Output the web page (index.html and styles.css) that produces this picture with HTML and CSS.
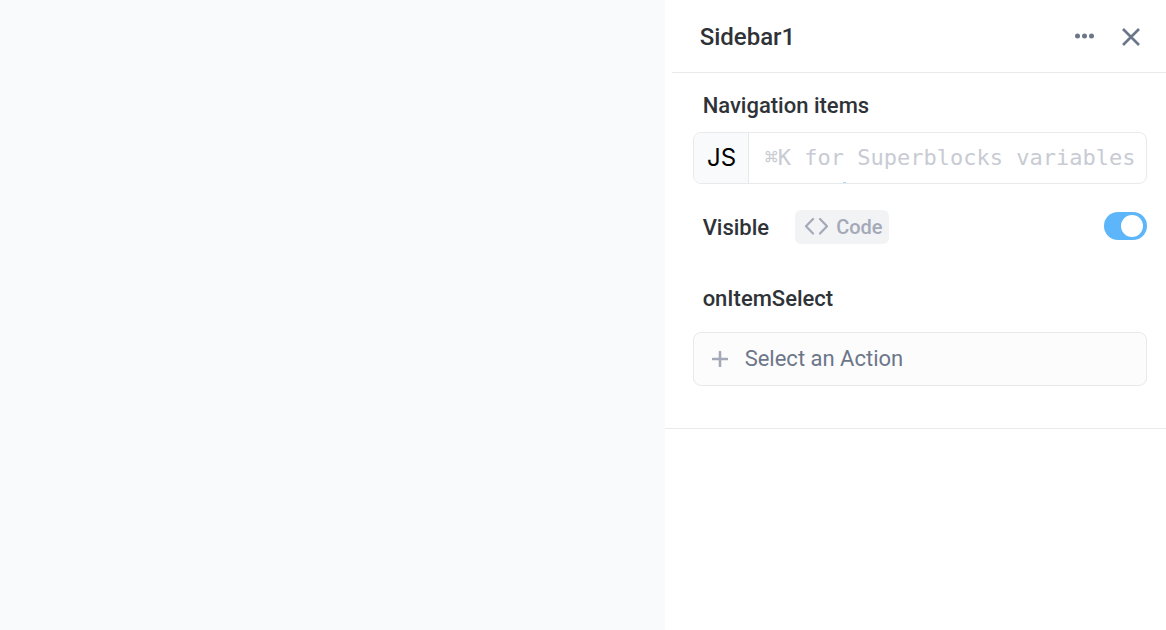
FILE: index.html
```
<!DOCTYPE html>
<html lang="en">
<head>
<meta charset="UTF-8">
<meta name="viewport" content="width=device-width, initial-scale=1.0">
<title>Sidebar1</title>
<link rel="stylesheet" href="styles.css">
</head>
<body>

<div class="editor">
  <main class="canvas"></main>

  <aside class="panel">
    <header class="panel-header">
      <h1 class="panel-title">Sidebar1</h1>
      <button class="icon-button" type="button" aria-label="More options">
        <svg width="20" height="6" viewBox="0 0 20 6" fill="currentColor">
          <circle cx="2.5" cy="3" r="2.5"/>
          <circle cx="9.5" cy="3" r="2.5"/>
          <circle cx="16.5" cy="3" r="2.5"/>
        </svg>
      </button>
      <button class="icon-button close" type="button" aria-label="Close">
        <svg width="18" height="20" viewBox="0 0 18 20" fill="none" stroke="currentColor" stroke-width="2.6">
          <path d="M1 3l16 16M17 3L1 19"/>
        </svg>
      </button>
    </header>

    <section class="properties">
      <label class="label" for="navItems">Navigation items</label>
      <div class="code-field">
        <span class="code-lang">JS</span>
        <input class="code-input" id="navItems" type="text" placeholder="⌘K for Superblocks variables">
        <span class="cursor-mark"></span>
      </div>

      <div class="row">
        <label class="label" for="visible">Visible</label>
        <button class="code-button" type="button">
          <svg width="24" height="18" viewBox="0 0 24 18" fill="none" stroke="currentColor" stroke-width="2.2" stroke-linecap="round" stroke-linejoin="round">
            <path d="M9 1L2 8.300l7 7.200M16 1l7 7.300-7 7.200"/>
          </svg>
          Code
        </button>
        <input class="toggle" id="visible" type="checkbox" checked>
      </div>

      <h2 class="label">onItemSelect</h2>
      <button class="action-button" type="button">
        <svg width="16" height="16" viewBox="0 0 16 16" fill="none" stroke="currentColor" stroke-width="2.6" stroke-linecap="round">
          <path d="M8 1v14M1 8h14"/>
        </svg>
        <span>Select an Action</span>
      </button>
    </section>
  </aside>
</div>

</body>
</html>
```
FILE: styles.css
```
* {
  box-sizing: border-box;
}

body {
  margin: 0;
  font-family: Roboto, sans-serif;
  color: #2f3338;
  background-color: #ffffff;
}

button {
  margin: 0;
  border: none;
  background: none;
  font-family: inherit;
  cursor: pointer;
}

svg {
  display: block;
  flex: none;
}

.editor {
  display: flex;
  min-height: 100vh;
}

.canvas {
  flex: 1;
  background-color: #f9fafc;
}

.panel {
  width: 43%;
  background-color: #ffffff;
}

/* Header */
.panel-header {
  display: flex;
  align-items: center;
  height: 73px;
  margin-left: 7px;
  padding: 0 26px 0 28px;
  border-bottom: 1px solid #e8e9eb;
}

.panel-title {
  flex: 1;
  margin: 0;
  padding-top: 2px;
  font-size: 24px;
  line-height: 28px;
  font-weight: 500;
}

.icon-button {
  padding: 0;
  color: #6c7689;
}

.close {
  margin-left: 27px;
}

/* Properties */
.properties {
  padding: 17px 19px 42px 28px;
  border-bottom: 1px solid #e8e9eb;
}

.label {
  display: block;
  margin: 0;
  padding: 2px 0 0 10px;
  font-size: 22px;
  line-height: 28px;
  font-weight: 500;
}

.code-field {
  position: relative;
  display: flex;
  height: 52px;
  margin-top: 12px;
  border: 1px solid #e8e9eb;
  border-radius: 8px;
  overflow: hidden;
}

.code-lang {
  display: flex;
  align-items: center;
  justify-content: center;
  width: 55px;
  padding: 0 0 2px 2px;
  border-right: 1px solid #e8e9eb;
  background-color: #f9fafc;
  color: #000000;
  font-family: Inter, sans-serif;
  font-size: 24px;
}

.code-input {
  flex: 1;
  min-width: 0;
  padding: 0 0 2px 16px;
  border: none;
  outline: none;
  background: none;
  font-family: "DejaVu Sans Mono", monospace;
  font-size: 22px;
}

.code-input::placeholder {
  color: #c8cbd3;
  opacity: 1;
}

/* Tip of the editor cursor showing at the bottom edge */
.cursor-mark {
  position: absolute;
  left: 149px;
  bottom: 0;
  width: 3px;
  height: 1px;
  background-color: #a5dafa;
}

.row {
  display: flex;
  align-items: center;
  margin: 26px 0 39px;
}

.code-button {
  display: flex;
  align-items: center;
  gap: 8px;
  height: 34px;
  margin-left: 26px;
  padding: 0 6px 1px 9px;
  border-radius: 6px;
  background-color: #f2f3f5;
  color: #a4a9b7;
  font-size: 20px;
  font-weight: 500;
}

.toggle {
  appearance: none;
  width: 43px;
  height: 28px;
  margin: 0 0 2px auto;
  padding: 3px 4px;
  border-radius: 14px;
  background-color: #5cb6f9;
  cursor: pointer;
}

.toggle::before {
  content: "";
  display: block;
  width: 22px;
  height: 22px;
  border-radius: 50%;
  background-color: #ffffff;
}

.toggle:checked::before {
  margin-left: auto;
}

.action-button {
  display: flex;
  align-items: center;
  gap: 17px;
  width: 100%;
  height: 54px;
  margin-top: 19px;
  padding: 0 18px 1px;
  border: 1px solid #e8e9eb;
  border-radius: 8px;
  background-color: #fcfcfd;
  color: #a4a9b7;
  font-size: 22px;
}

.action-button span {
  color: #6c7689;
}
```
